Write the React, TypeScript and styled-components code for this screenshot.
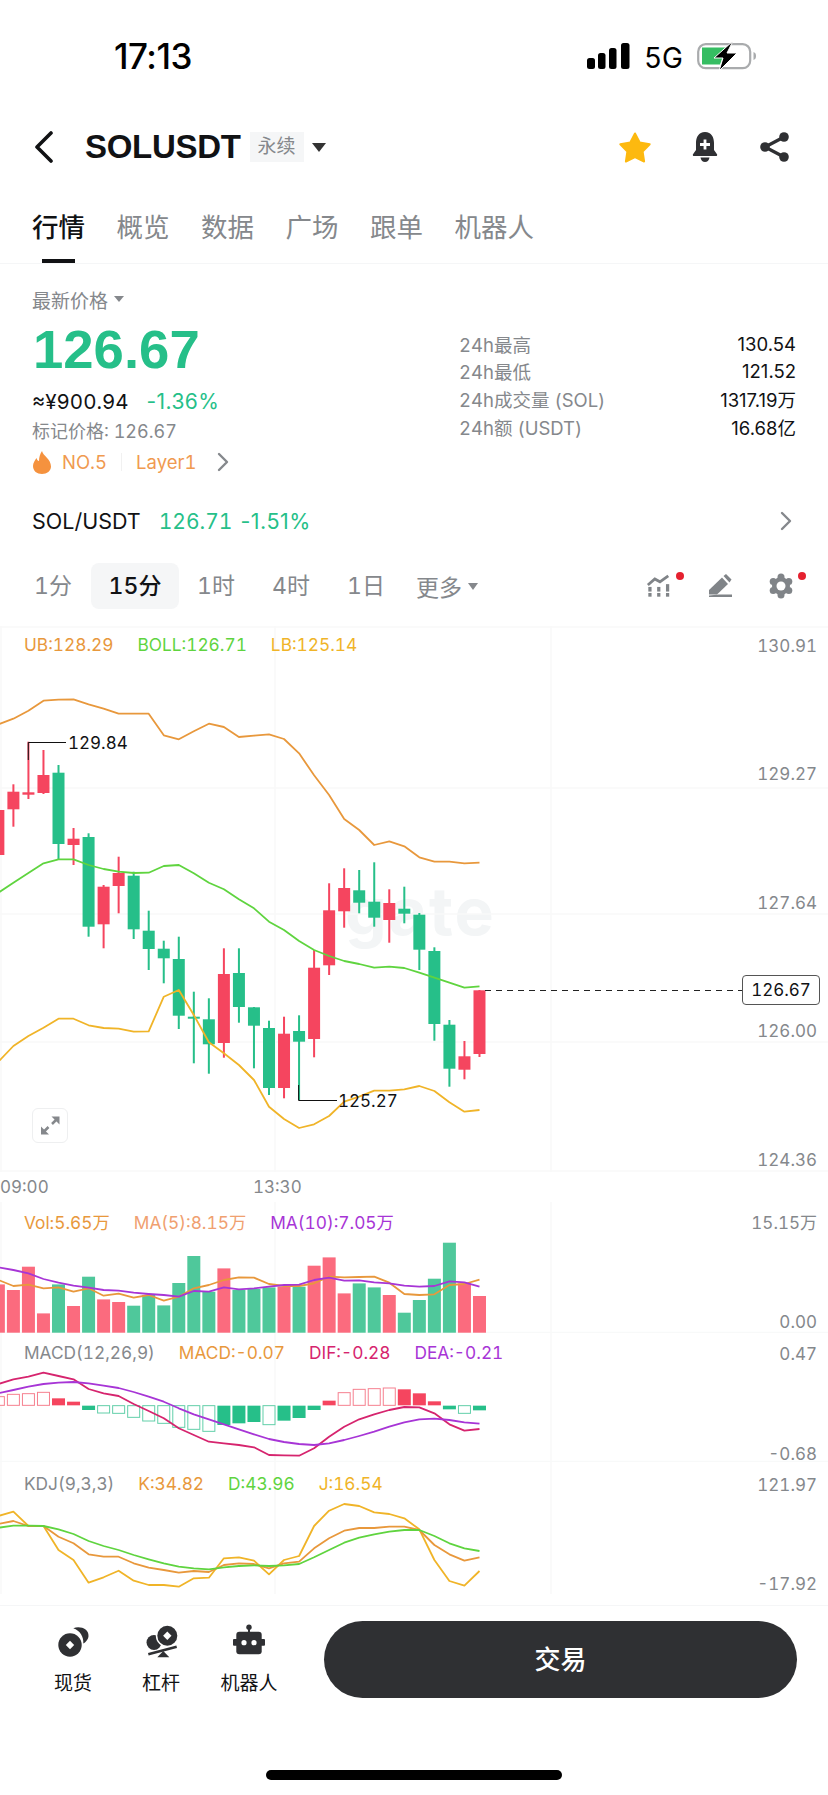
import styled, { createGlobalStyle } from 'styled-components';

const Colors = {
  text: '#111214',
  gray: '#85888c',
  green: '#26bf89',
  red: '#f5455f',
  orange: '#e8983c',
  lime: '#5fd43f',
  yellow: '#f0b428',
  pink: '#d6246e',
  purple: '#a735d6',
  dark: '#2f3033',
  line: '#f5f6f7',
  grid: '#f8f9f9',
};

const FONT = `Inter, 'Noto Sans CJK SC', sans-serif`;

// candle centres are evenly spaced, index -1 is the one cut off by the left edge
const cx = (i: number) => 13.4 + 15.035 * i;
const fromCrop = (top: number, zs: number[]) => zs.map((z) => top + z / 3);
const points = (ys: number[]) =>
  ys.map((y, i) => `${cx(i - 1).toFixed(1)},${y.toFixed(1)}`).join(' ');

type Candle = [number, number, number, number, number]; // up, body top, body bottom, wick top, wick bottom

const CANDLES: Candle[] = [
  [0, 810, 855, 810, 855],
  [0, 791.7, 809.3, 784.3, 826.7],
  [0, 792.3, 794.7, 741.7, 799],
  [0, 775, 793, 750, 794],
  [1, 772.7, 844, 765, 860],
  [0, 838.7, 845, 828, 865],
  [1, 837, 926.7, 833.3, 936.7],
  [0, 886.7, 924.3, 885, 948.3],
  [0, 873, 886, 856.7, 913.3],
  [1, 875.7, 929.3, 871.7, 939],
  [1, 930.7, 949, 910.7, 970],
  [1, 948.7, 958.3, 940.7, 983.3],
  [1, 959, 1015.7, 936.7, 1029],
  [1, 1016.7, 1018.3, 991.7, 1063.3],
  [1, 1019.3, 1044.3, 998.3, 1073.7],
  [0, 974, 1043, 948.3, 1057.7],
  [1, 973, 1007, 948.3, 1022.7],
  [1, 1007.3, 1025.7, 1007, 1068.3],
  [1, 1028, 1088, 1020.7, 1095],
  [0, 1033.7, 1088, 1016.7, 1098.3],
  [1, 1031, 1041.7, 1015.3, 1100],
  [0, 967.7, 1039, 950, 1057.3],
  [0, 910.3, 965.3, 883.3, 975],
  [0, 888, 911.3, 868.3, 927.7],
  [1, 890.3, 902.7, 870, 913.3],
  [1, 901.7, 917.7, 862.3, 926.7],
  [0, 903, 920, 889.3, 942.7],
  [1, 908.7, 913.7, 886.7, 923.3],
  [1, 914.7, 949.7, 913, 970],
  [1, 951, 1024, 947.3, 1040.7],
  [1, 1024.7, 1068.7, 1020, 1086.7],
  [0, 1056.3, 1069.7, 1041, 1079.3],
  [0, 990.3, 1054, 990, 1057],
];

const UB = fromCrop(620, [313, 296, 272, 242, 239, 238, 253, 266, 281, 281, 281, 346, 358, 334, 311, 321, 351, 347, 343, 357, 400, 466, 525, 597, 630, 675, 664, 679, 712, 725, 725, 730, 728]);
const BOLL = [892.7, 882.7, 873, 863.3, 859.3, 859.3, 865, 869, 871.7, 873, 872.7, 866, 865, 873.3, 882.7, 889.3, 899.3, 908.3, 921.7, 930, 941, 950, 956, 961, 964, 967.7, 966.7, 968, 972.7, 977.7, 982.7, 987.7, 986.3];
const LB = fromCrop(880, [545, 498, 468, 443, 416, 416, 436, 444, 446, 455, 454, 350, 330, 405, 487, 520, 555, 600, 680, 717, 744, 733, 708, 665, 650, 632, 632, 628, 618, 633, 667, 695, 690]);

const VOLUMES: [number, number][] = [
  [0, 48.3], [0, 42.7], [0, 66], [0, 19.3], [1, 48.3], [0, 26.7], [1, 56], [0, 33.3], [0, 30.7], [1, 27], [1, 37.7],
  [1, 27.3], [1, 49.7], [1, 76.7], [1, 41], [0, 64.3], [1, 42.7], [1, 43.7], [1, 45.3], [0, 46], [1, 46], [0, 67],
  [0, 75.3], [0, 39.3], [1, 49.3], [1, 45.3], [0, 37.7], [1, 20], [1, 32.7], [1, 54], [1, 90], [0, 49.3], [0, 36.7],
];
const MA5 = fromCrop(1180, [300, 318, 314, 325, 322, 335, 325, 347, 341, 353, 345, 362, 350, 325, 315, 300, 292, 293, 312, 318, 318, 310, 290, 292, 291, 290, 308, 342, 345, 343, 315, 312, 299]);
const MA10 = fromCrop(1180, [262, 270, 280, 297, 308, 317, 323, 330, 332, 338, 342, 345, 350, 333, 335, 322, 328, 325, 320, 315, 314, 300, 293, 302, 301, 307, 310, 317, 320, 318, 304, 307, 320]);

// [edge in the 3x crop, filled]; above 676 is a green bar, below it a red one
const MACD_BARS: [number, number][] = [
  [650, 0], [643, 0], [641, 0], [637, 0], [655, 1], [665, 1], [690, 1], [699, 0], [700, 0], [712, 0], [723, 0],
  [730, 0], [742, 0], [748, 0], [754, 0], [735, 1], [730, 1], [726, 1], [734, 0], [722, 1], [714, 1], [690, 1],
  [662, 1], [638, 0], [628, 0], [626, 0], [624, 0], [628, 1], [640, 1], [664, 1], [688, 1], [700, 0], [691, 1],
];
const DIF = fromCrop(1180, [612, 598, 590, 578, 588, 598, 627, 640, 648, 672, 693, 715, 745, 765, 785, 790, 795, 802, 825, 826, 827, 805, 770, 740, 718, 703, 690, 681, 682, 700, 733, 752, 747]);
const DEA = fromCrop(1180, [640, 630, 620, 612, 608, 606, 610, 617, 624, 636, 650, 665, 685, 703, 718, 733, 748, 763, 777, 786, 792, 795, 790, 780, 768, 755, 740, 727, 718, 716, 720, 727, 731]);

const K = fromCrop(1440, [252, 243, 258, 258, 290, 310, 343, 350, 350, 370, 383, 390, 398, 393, 396, 375, 370, 372, 385, 370, 365, 325, 295, 272, 264, 264, 260, 260, 270, 315, 343, 362, 352]);
const D = fromCrop(1440, [263, 257, 257, 258, 268, 282, 303, 318, 330, 345, 358, 370, 380, 385, 388, 382, 378, 376, 378, 376, 372, 352, 330, 308, 293, 283, 275, 270, 270, 288, 310, 325, 333]);
const J = fromCrop(1440, [228, 215, 258, 258, 330, 360, 428, 412, 392, 422, 435, 435, 440, 415, 413, 355, 352, 362, 403, 360, 348, 258, 212, 192, 198, 217, 222, 235, 268, 360, 423, 437, 393]);

function PanelGrid({ top, height, rows = [] }: { top: number; height: number; rows?: number[] }) {
  return (
    <g stroke={Colors.grid} strokeWidth={1.5}>
      {rows.map((y) => (
        <line key={y} x1={0} x2={828} y1={y} y2={y} />
      ))}
      <line x1={1} x2={1} y1={top} y2={top + height} />
      <line x1={275} x2={275} y1={top} y2={top + height} />
      <line x1={551} x2={551} y1={top} y2={top + height} />
    </g>
  );
}

function Trend({ ys, color }: { ys: number[]; color: string }) {
  return <polyline points={points(ys)} fill="none" stroke={color} strokeWidth={1.8} strokeLinejoin="round" />;
}

function PriceChart() {
  return (
    <ChartSvg viewBox="0 626 828 546">
      <PanelGrid top={626} height={546} rows={[627, 788, 914, 1042, 1171]} />
      {CANDLES.map(([up, top, bottom, high, low], i) => {
        const color = up ? Colors.green : Colors.red;
        const x = cx(i - 1);
        return (
          <g key={i} fill={color}>
            <rect x={x - 1} y={high} width={2} height={low - high} />
            <rect x={x - 6} y={top} width={12} height={Math.max(bottom - top, 2)} />
          </g>
        );
      })}
      <Trend ys={UB} color={Colors.orange} />
      <Trend ys={BOLL} color={Colors.lime} />
      <Trend ys={LB} color={Colors.yellow} />
      <polyline points="28.3,760 28.3,742.5 66,742.5" fill="none" stroke="#111" strokeWidth={1} />
      <polyline points="298.6,1085 298.6,1100.5 337,1100.5" fill="none" stroke="#111" strokeWidth={1} />
      <line x1={485} x2={742} y1={990.5} y2={990.5} stroke="#222" strokeWidth={1} strokeDasharray="6 5" />
    </ChartSvg>
  );
}

function VolumeChart() {
  return (
    <ChartSvg viewBox="0 1202 828 131">
      <PanelGrid top={1202} height={131} rows={[1332.5]} />
      {VOLUMES.map(([up, h], i) => (
        <rect key={i} x={cx(i - 1) - 6.5} y={1332.7 - h} width={13} height={h} fill={up ? '#4fc89b' : '#fb6b7e'} />
      ))}
      <Trend ys={MA5} color={Colors.orange} />
      <Trend ys={MA10} color={Colors.purple} />
    </ChartSvg>
  );
}

function MacdChart() {
  return (
    <ChartSvg viewBox="0 1333 828 129">
      <PanelGrid top={1333} height={129} rows={[1461.5]} />
      {MACD_BARS.map(([edge, filled], i) => {
        const isUp = edge < 676;
        const y1 = 1180 + Math.min(edge, 677) / 3;
        const y2 = 1180 + Math.max(edge, 676) / 3;
        const x = cx(i - 1) - 6.5;
        return filled ? (
          <rect key={i} x={x} y={y1} width={13} height={y2 - y1} fill={isUp ? Colors.red : Colors.green} />
        ) : (
          <rect
            key={i}
            x={x + 0.5}
            y={y1}
            width={12}
            height={y2 - y1}
            fill="#fff"
            stroke={isUp ? '#f6808f' : '#62cfa9'}
            strokeWidth={1}
          />
        );
      })}
      <Trend ys={DIF} color={Colors.pink} />
      <Trend ys={DEA} color={Colors.purple} />
    </ChartSvg>
  );
}

function KdjChart() {
  return (
    <ChartSvg viewBox="0 1462 828 143">
      <PanelGrid top={1462} height={132} />
      <Trend ys={J} color={Colors.yellow} />
      <Trend ys={K} color={Colors.orange} />
      <Trend ys={D} color={Colors.lime} />
    </ChartSvg>
  );
}

const TABS = ['行情', '概览', '数据', '广场', '跟单', '机器人'];
const STATS = [
  ['24h最高', '130.54'],
  ['24h最低', '121.52'],
  ['24h成交量 (SOL)', '1317.19万'],
  ['24h额 (USDT)', '16.68亿'],
];
const RANGES = [
  { label: '1分', width: 60, left: 23 },
  { label: '15分', width: 88, left: 8 },
  { label: '1时', width: 54, left: 10 },
  { label: '4时', width: 54, left: 21 },
  { label: '1日', width: 52, left: 22 },
];

export default function App() {
  return (
    <Page>
      <GlobalStyle />
      <StatusBar>
        <Clock>17:13</Clock>
        <StatusIcons>
          <svg width="43" height="27" viewBox="0 0 43 27" fill="#000">
            <rect x="0" y="15" width="8" height="11" rx="2.5" />
            <rect x="11" y="10" width="7.5" height="16" rx="2.5" />
            <rect x="22" y="5" width="7.5" height="21" rx="2.5" />
            <rect x="34" y="0" width="8.5" height="26" rx="2.5" />
          </svg>
          <NetworkLabel>5G</NetworkLabel>
          <svg width="60" height="30" viewBox="0 0 60 30">
            <rect x="1.2" y="3.2" width="52" height="24" rx="7.5" fill="none" stroke="#a9abad" strokeWidth="2.2" />
            <path d="M5 6.5h24l-6 17H5z" fill="#35bd62" />
            <path d="M56.5 11c2 .8 2.5 2 2.5 4s-.5 3.2-2.5 4z" fill="#a9abad" />
            <path d="M36 0 17 17h9L22 30l18-18H30z" fill="#000" stroke="#fff" strokeWidth="1" />
          </svg>
        </StatusIcons>
      </StatusBar>

      <NavBar>
        <svg width="20" height="32" viewBox="0 0 20 32" fill="none">
          <path d="M18 2 4 16l14 14" stroke={Colors.text} strokeWidth="3.6" strokeLinecap="round" strokeLinejoin="round" />
        </svg>
        <Title>SOLUSDT</Title>
        <Tag>永续</Tag>
        <Caret $size={7.5} $color="#333" />
        <NavActions>
          <svg width="34" height="32" viewBox="0 0 34 32">
            <polygon
              points="17,2.5 21.7,11.5 31.7,13.2 24.6,20.5 26.1,30.5 17,26 7.9,30.5 9.4,20.5 2.3,13.2 12.3,11.5"
              fill="#fdb90f"
              stroke="#fdb90f"
              strokeWidth="2"
              strokeLinejoin="round"
            />
          </svg>
          <svg width="28" height="32" viewBox="0 0 28 32" fill={Colors.dark}>
            <path d="M14 1C7.5 1 5 6.5 5 12v7l-3 4.2c-.5.8 0 1.8 1 1.8h22c1 0 1.5-1 1-1.8L23 19v-7c0-5.5-2.5-11-9-11z" />
            <path d="M9.5 26.5h9c-.5 3-2.3 4.5-4.5 4.5s-4-1.5-4.5-4.5z" />
            <path d="M12.6 8.5h2.8v3.6H19v2.8h-3.6v3.6h-2.8v-3.6H9v-2.8h3.6z" fill="#fff" />
          </svg>
          <svg width="30" height="30" viewBox="0 0 30 30" fill={Colors.dark}>
            <path d="M24 5 5 15l19 10" fill="none" stroke={Colors.dark} strokeWidth="3.4" />
            <circle cx="24" cy="5" r="4.8" />
            <circle cx="5" cy="15" r="4.8" />
            <circle cx="24" cy="25" r="4.8" />
          </svg>
        </NavActions>
      </NavBar>

      <TabBar>
        {TABS.map((tab, i) => (
          <Tab key={tab} $active={i === 0}>
            {tab}
          </Tab>
        ))}
      </TabBar>

      <PriceSection>
        <PriceInfo>
          <LatestLabel>
            最新价格
            <Caret $size={5} $color="#85888c" />
          </LatestLabel>
          <BigPrice>126.67</BigPrice>
          <FiatRow>
            <span>≈¥900.94</span>
            <Change>-1.36%</Change>
          </FiatRow>
          <MarkPrice>标记价格: 126.67</MarkPrice>
          <HotRow>
            <svg width="20" height="23" viewBox="0 0 20 23" fill="#f5923e">
              <path d="M10 0c1 5 9 8 9 15.5C19 20 15 23 10 23S1 20 1 15c0-3.5 2-5.5 3.5-8 .5 2 1.5 3 2.5 3 0-4 1-7 3-10z" />
            </svg>
            <HotText>NO.5</HotText>
            <HotDivider />
            <HotText>Layer1</HotText>
            <Chevron width="12" height="20" viewBox="0 0 12 20">
              <path d="m2 2 8 8-8 8" />
            </Chevron>
          </HotRow>
        </PriceInfo>
        <Stats>
          {STATS.map(([label, value]) => (
            <StatRow key={label}>
              <StatLabel>{label}</StatLabel>
              <StatValue>{value}</StatValue>
            </StatRow>
          ))}
        </Stats>
      </PriceSection>

      <TickerRow>
        <TickerName>SOL/USDT</TickerName>
        <TickerPrice>126.71</TickerPrice>
        <TickerChange>-1.51%</TickerChange>
        <Chevron width="12" height="20" viewBox="0 0 12 20">
          <path d="m2 2 8 8-8 8" />
        </Chevron>
      </TickerRow>

      <RangeBar>
        {RANGES.map((range, i) => (
          <RangeItem key={range.label} $active={i === 1} $width={range.width} $left={range.left}>
            {range.label}
          </RangeItem>
        ))}
        <MoreRange>
          更多
          <Caret $size={5.5} $color="#85888c" />
        </MoreRange>
        <RangeTools>
          <ToolIcon>
            <svg width="28" height="26" viewBox="0 0 28 26" fill="#808488">
              <path d="M2 12 9.5 5.5 15 8.5 24 2" fill="none" stroke="#808488" strokeWidth="3" />
              <rect x="2.5" y="14" width="3.5" height="5" />
              <rect x="2.5" y="20.5" width="3.5" height="4" />
              <rect x="12" y="14" width="3.5" height="5" />
              <rect x="12" y="20.5" width="3.5" height="4" />
              <rect x="21.5" y="11" width="3.5" height="8" />
              <rect x="21.5" y="20.5" width="3.5" height="4" />
            </svg>
            <AlertDot />
          </ToolIcon>
          <ToolIcon>
            <svg width="24" height="24" viewBox="0 0 24 24" fill="#808488">
              <path d="M1 16 14 3.5l6 6.5L9 20.5H1z" />
              <path d="M15.5 2 18 0l5.5 5.5-2 3z" />
              <path d="M11 20.5h13V23H1v-1.5z" />
            </svg>
          </ToolIcon>
          <ToolIcon>
            <svg width="26" height="26" viewBox="0 0 26 26" fill="#808488">
              <circle cx="13" cy="13" r="9" />
              <circle cx="13" cy="4" r="3.5" />
              <circle cx="13" cy="22" r="3.5" />
              <circle cx="5.2" cy="8.5" r="3.5" />
              <circle cx="20.8" cy="8.5" r="3.5" />
              <circle cx="5.2" cy="17.5" r="3.5" />
              <circle cx="20.8" cy="17.5" r="3.5" />
              <circle cx="13" cy="13" r="4.5" fill="#fff" />
            </svg>
            <AlertDot />
          </ToolIcon>
        </RangeTools>
      </RangeBar>

      <MainPanel>
        <Watermark>gate</Watermark>
        <PriceChart />
        <Legend $top={9}>
          <LegendItem $color={Colors.orange}>UB:128.29</LegendItem>
          <LegendItem $color={Colors.lime}>BOLL:126.71</LegendItem>
          <LegendItem $color={Colors.yellow}>LB:125.14</LegendItem>
        </Legend>
        <AxisLabel $top={20}>130.91</AxisLabel>
        <AxisLabel $top={148}>129.27</AxisLabel>
        <AxisLabel $top={277}>127.64</AxisLabel>
        <AxisLabel $top={405}>126.00</AxisLabel>
        <AxisLabel $top={534}>124.36</AxisLabel>
        <PeakLabel $left={68} $top={117}>129.84</PeakLabel>
        <PeakLabel $left={338} $top={475}>125.27</PeakLabel>
        <LastPrice>126.67</LastPrice>
        <ExpandButton>
          <svg width="36" height="35" viewBox="0 0 36 35" fill="#85888c">
            <path d="M19.5 8.5h8v8zM9 18.5v8h8z" />
            <path d="m25 11-5 5M11.5 24l5-5" stroke="#85888c" strokeWidth="2.5" />
          </svg>
        </ExpandButton>
      </MainPanel>

      <TimeAxis>
        <TimeLabel $left={0}>09:00</TimeLabel>
        <TimeLabel $left={253}>13:30</TimeLabel>
      </TimeAxis>

      <SubPanel $height={131}>
        <VolumeChart />
        <Legend $top={11}>
          <LegendItem $color={Colors.orange}>Vol:5.65万</LegendItem>
          <LegendItem $color="#f0a070">MA(5):8.15万</LegendItem>
          <LegendItem $color={Colors.purple}>MA(10):7.05万</LegendItem>
        </Legend>
        <AxisLabel $top={21}>15.15万</AxisLabel>
        <AxisLabel $top={120}>0.00</AxisLabel>
      </SubPanel>

      <SubPanel $height={129}>
        <MacdChart />
        <Legend $top={10}>
          <LegendItem $color={Colors.gray}>MACD(12,26,9)</LegendItem>
          <LegendItem $color={Colors.orange}>MACD:-0.07</LegendItem>
          <LegendItem $color={Colors.pink}>DIF:-0.28</LegendItem>
          <LegendItem $color={Colors.purple}>DEA:-0.21</LegendItem>
        </Legend>
        <AxisLabel $top={21}>0.47</AxisLabel>
        <AxisLabel $top={120.5}>-0.68</AxisLabel>
      </SubPanel>

      <SubPanel $height={143}>
        <KdjChart />
        <Legend $top={12}>
          <LegendItem $color={Colors.gray}>KDJ(9,3,3)</LegendItem>
          <LegendItem $color={Colors.orange}>K:34.82</LegendItem>
          <LegendItem $color={Colors.lime}>D:43.96</LegendItem>
          <LegendItem $color={Colors.yellow}>J:16.54</LegendItem>
        </Legend>
        <AxisLabel $top={22.5}>121.97</AxisLabel>
        <AxisLabel $top={122}>-17.92</AxisLabel>
      </SubPanel>

      <BottomBar>
        <BottomItem>
          <svg width="36" height="36" viewBox="0 0 36 36" fill={Colors.dark}>
            <path d="M18.3 4.3C25 1.5 34 5 33.5 12c0 3-2.5 6-5.2 7.6C29 13 25 6.5 18.3 4.3z" />
            <circle cx="15" cy="21" r="11.7" />
            <path d="m15 16.8 4.2 4.2-4.2 4.2-4.2-4.2z" fill="#fff" />
          </svg>
          <BottomLabel>现货</BottomLabel>
        </BottomItem>
        <BottomItem>
          <svg width="36" height="36" viewBox="0 0 36 36" fill={Colors.dark}>
            <circle cx="11" cy="18.5" r="7.5" />
            <circle cx="24.3" cy="11.7" r="11.5" fill="#fff" />
            <circle cx="24.3" cy="11.7" r="10" />
            <path d="m24.3 7.5 4.2 4.2-4.2 4.2-4.2-4.2z" fill="#fff" />
            <path d="M5.3 30.3 33.7 22.7" stroke={Colors.dark} strokeWidth="2.6" />
            <path d="M20.3 27 26.3 33.3H14.3z" />
          </svg>
          <BottomLabel>杠杆</BottomLabel>
        </BottomItem>
        <BottomItem>
          <svg width="36" height="36" viewBox="0 0 36 36" fill={Colors.dark}>
            <circle cx="18" cy="3.3" r="2.7" />
            <rect x="17" y="4" width="2" height="5" />
            <rect x="5.3" y="7.7" width="25.4" height="22.6" rx="3" />
            <rect x="2" y="15" width="32" height="6.7" rx="1" />
            <circle cx="13" cy="18.7" r="2.6" fill="#fff" />
            <circle cx="23" cy="18.7" r="2.6" fill="#fff" />
          </svg>
          <BottomLabel>机器人</BottomLabel>
        </BottomItem>
        <TradeButton>交易</TradeButton>
        <HomeIndicator />
      </BottomBar>
    </Page>
  );
}

const GlobalStyle = createGlobalStyle`
  html, body {
    margin: 0;
    padding: 0;
    background: #fff;
  }
  body {
    font-family: ${FONT};
    font-variant-numeric: tabular-nums;
  }
  * {
    box-sizing: border-box;
  }
`;

const Page = styled.div`
  width: 828px;
  height: 1795px;
  overflow: hidden;
  background: #fff;
  color: ${Colors.text};
`;

const StatusBar = styled.div`
  height: 110px;
  padding: 40px 71px 0 114px;
  display: flex;
  justify-content: space-between;
  align-items: flex-start;
`;

const Clock = styled.div`
  font-size: 35px;
  line-height: 32px;
  font-weight: 500;
  font-variant-numeric: normal;
  letter-spacing: -0.5px;
  color: #000;
`;

const StatusIcons = styled.div`
  display: flex;
  align-items: center;
  gap: 14px;
  height: 32px;
`;

const NetworkLabel = styled.div`
  font-size: 28px;
  line-height: 30px;
  margin-top: 3px;
  font-weight: 400;
  color: #000;
`;

const NavBar = styled.div`
  height: 74px;
  padding: 0 38px 0 33px;
  display: flex;
  align-items: center;
`;

const Title = styled.div`
  margin-left: 32px;
  font-family: 'Liberation Sans', sans-serif;
  font-size: 33px;
  font-weight: 700;
  letter-spacing: -0.3px;
`;

const Tag = styled.div`
  margin: 0 8px 0 9px;
  width: 54px;
  height: 30px;
  background: ${Colors.line};
  color: ${Colors.gray};
  font-size: 19px;
  line-height: 30px;
  text-align: center;
`;

const Caret = styled.i<{ $size: number; $color: string }>`
  display: inline-block;
  width: 0;
  height: 0;
  border-left: ${(p) => p.$size}px solid transparent;
  border-right: ${(p) => p.$size}px solid transparent;
  border-top: ${(p) => p.$size * 1.3}px solid ${(p) => p.$color};
`;

const NavActions = styled.div`
  margin-left: auto;
  display: flex;
  align-items: center;
  gap: 41px;

  svg:first-child {
    margin-right: -2px;
  }
`;

const TabBar = styled.div`
  height: 80px;
  padding: 23px 0 0 32px;
  display: flex;
  gap: 31.5px;
  border-bottom: 1px solid ${Colors.line};
`;

const Tab = styled.div<{ $active?: boolean }>`
  position: relative;
  height: 40px;
  font-size: 26.5px;
  line-height: 41px;
  font-weight: ${(p) => (p.$active ? 500 : 400)};
  color: ${(p) => (p.$active ? Colors.text : Colors.gray)};

  &::after {
    content: '';
    display: ${(p) => (p.$active ? 'block' : 'none')};
    position: absolute;
    left: 10px;
    right: 10px;
    top: 51.5px;
    height: 4.5px;
    background: ${Colors.text};
  }
`;

const PriceSection = styled.div`
  height: 226px;
  padding: 0 32px;
  display: flex;
  justify-content: space-between;
`;

const PriceInfo = styled.div`
  padding-top: 22px;
  display: flex;
  flex-direction: column;
`;

const LatestLabel = styled.div`
  height: 26px;
  display: flex;
  align-items: center;
  gap: 6px;
  font-size: 19px;
  color: ${Colors.gray};
`;

const BigPrice = styled.div`
  margin-top: 8px;
  height: 60px;
  font-family: 'Liberation Sans', sans-serif;
  font-size: 54.5px;
  line-height: 60px;
  font-weight: 700;
  color: ${Colors.green};
  margin-left: 1px;
`;

const FiatRow = styled.div`
  margin-top: 7px;
  height: 30px;
  display: flex;
  gap: 18px;
  font-size: 20.5px;
  line-height: 30px;
`;

const Change = styled.span`
  font-size: 21px;
  font-variant-numeric: normal;
  letter-spacing: 0.4px;
  color: ${Colors.green};
`;

const MarkPrice = styled.div`
  height: 30px;
  font-size: 18px;
  line-height: 30px;
  color: ${Colors.gray};
`;

const HotRow = styled.div`
  height: 30px;
  display: flex;
  align-items: center;
`;

const HotText = styled.span`
  font-size: 18.5px;
  color: #f09a50;
  margin-left: 10px;
`;

const HotDivider = styled.span`
  width: 1px;
  height: 18px;
  margin: 0 4px 0 14px;
  background: #f1f1f1;
`;

const Chevron = styled.svg`
  margin-left: 21px;
  fill: none;
  stroke: ${Colors.gray};
  stroke-width: 2.4;
  stroke-linecap: round;
  stroke-linejoin: round;
`;

const Stats = styled.div`
  width: 337px;
  margin-top: 66px;
  display: flex;
  flex-direction: column;
`;

const StatRow = styled.div`
  height: 27.6px;
  display: flex;
  justify-content: space-between;
  align-items: center;
  font-size: 18.5px;
`;

const StatLabel = styled.span`
  color: ${Colors.gray};
`;

const StatValue = styled.span`
  font-variant-numeric: normal;
  color: ${Colors.text};
`;

const TickerRow = styled.div`
  height: 62px;
  padding: 0 36px 0 32px;
  display: flex;
  align-items: center;
  font-size: 21.5px;

  ${Chevron} {
    margin-left: auto;
  }
`;

const TickerName = styled.span`
  margin-right: 18px;
`;

const TickerPrice = styled.span`
  margin-right: 8px;
  font-size: 21px;
  color: ${Colors.green};
`;

const TickerChange = styled.span`
  font-variant-numeric: normal;
  letter-spacing: 0.5px;
  color: ${Colors.green};
`;

const RangeBar = styled.div`
  height: 74px;
  padding: 11px 0 0 0;
  display: flex;
  align-items: flex-start;
`;

const RangeItem = styled.div<{ $active?: boolean; $width: number; $left: number }>`
  width: ${(p) => p.$width}px;
  height: 46px;
  margin-left: ${(p) => p.$left}px;
  line-height: 46px;
  text-align: center;
  font-size: 23px;
  border-radius: 8px;
  background: ${(p) => (p.$active ? Colors.line : 'transparent')};
  color: ${(p) => (p.$active ? Colors.text : Colors.gray)};
  font-weight: ${(p) => (p.$active ? 500 : 400)};
`;

const MoreRange = styled.div`
  margin-left: 24px;
  height: 46px;
  display: flex;
  align-items: center;
  gap: 6px;
  font-size: 23px;
  color: ${Colors.gray};
`;

const RangeTools = styled.div`
  margin-left: auto;
  margin-right: 34px;
  height: 46px;
  display: flex;
  align-items: center;
  gap: 35px;
`;

const ToolIcon = styled.div`
  position: relative;
  width: 26px;
  display: flex;
  justify-content: center;
`;

const AlertDot = styled.span`
  position: absolute;
  right: -12px;
  top: -1px;
  width: 8px;
  height: 8px;
  border-radius: 50%;
  background: #e5212f;
`;

const MainPanel = styled.div`
  position: relative;
  height: 546px;
`;

const SubPanel = styled.div<{ $height: number }>`
  position: relative;
  height: ${(p) => p.$height}px;
`;

const ChartSvg = styled.svg`
  position: absolute;
  inset: 0;
  width: 100%;
  height: 100%;
  display: block;
`;

const Watermark = styled.span`
  position: absolute;
  left: 345px;
  top: 255px;
  font-size: 66px;
  line-height: 60px;
  letter-spacing: 2px;
  font-weight: 700;
  color: #f3f5f6;
`;

const Legend = styled.div<{ $top: number }>`
  position: absolute;
  left: 24px;
  top: ${(p) => p.$top}px;
  display: flex;
  gap: 24px;
`;

const LegendItem = styled.span<{ $color: string }>`
  font-size: 17.3px;
  line-height: 20px;
  color: ${(p) => p.$color};
`;

const AxisLabel = styled.span<{ $top: number }>`
  position: absolute;
  right: 11px;
  top: ${(p) => p.$top - 10}px;
  font-size: 17px;
  line-height: 20px;
  color: ${Colors.gray};
`;

const PeakLabel = styled.span<{ $left: number; $top: number }>`
  position: absolute;
  left: ${(p) => p.$left}px;
  top: ${(p) => p.$top - 10}px;
  font-size: 17px;
  line-height: 20px;
  color: ${Colors.text};
`;

const LastPrice = styled.div`
  position: absolute;
  left: 742px;
  top: 349px;
  width: 78px;
  height: 30px;
  border: 1px solid #555;
  border-radius: 4px;
  background: #fff;
  text-align: center;
  font-size: 17px;
  line-height: 28px;
  color: ${Colors.text};
`;

const ExpandButton = styled.div`
  position: absolute;
  left: 32px;
  top: 482px;
  width: 36px;
  height: 35px;
  border: 1px solid #eeeff0;
  border-radius: 6px;
  background: #fff;

  svg {
    display: block;
    margin: -1px;
  }
`;

const TimeAxis = styled.div`
  position: relative;
  height: 30px;
`;

const TimeLabel = styled.span<{ $left: number }>`
  position: absolute;
  left: ${(p) => p.$left}px;
  top: 5px;
  font-size: 17px;
  line-height: 20px;
  color: ${Colors.gray};
`;

const BottomBar = styled.div`
  position: relative;
  height: 190px;
  padding-left: 29px;
  display: flex;
  align-items: flex-start;
  border-top: 1.5px solid ${Colors.line};
`;

const BottomItem = styled.div`
  width: 88px;
  padding-top: 18px;
  display: flex;
  flex-direction: column;
  align-items: center;
`;

const BottomLabel = styled.span`
  margin-top: 11px;
  font-size: 19px;
  line-height: 26px;
  color: ${Colors.text};
`;

const TradeButton = styled.div`
  margin: 15px 0 0 31px;
  width: 473px;
  height: 77px;
  border-radius: 39px;
  background: ${Colors.dark};
  color: #fff;
  font-size: 26px;
  font-weight: 500;
  line-height: 77px;
  text-align: center;
`;

const HomeIndicator = styled.div`
  position: absolute;
  left: 266px;
  top: 164px;
  width: 296px;
  height: 10px;
  border-radius: 5px;
  background: #000;
`;
